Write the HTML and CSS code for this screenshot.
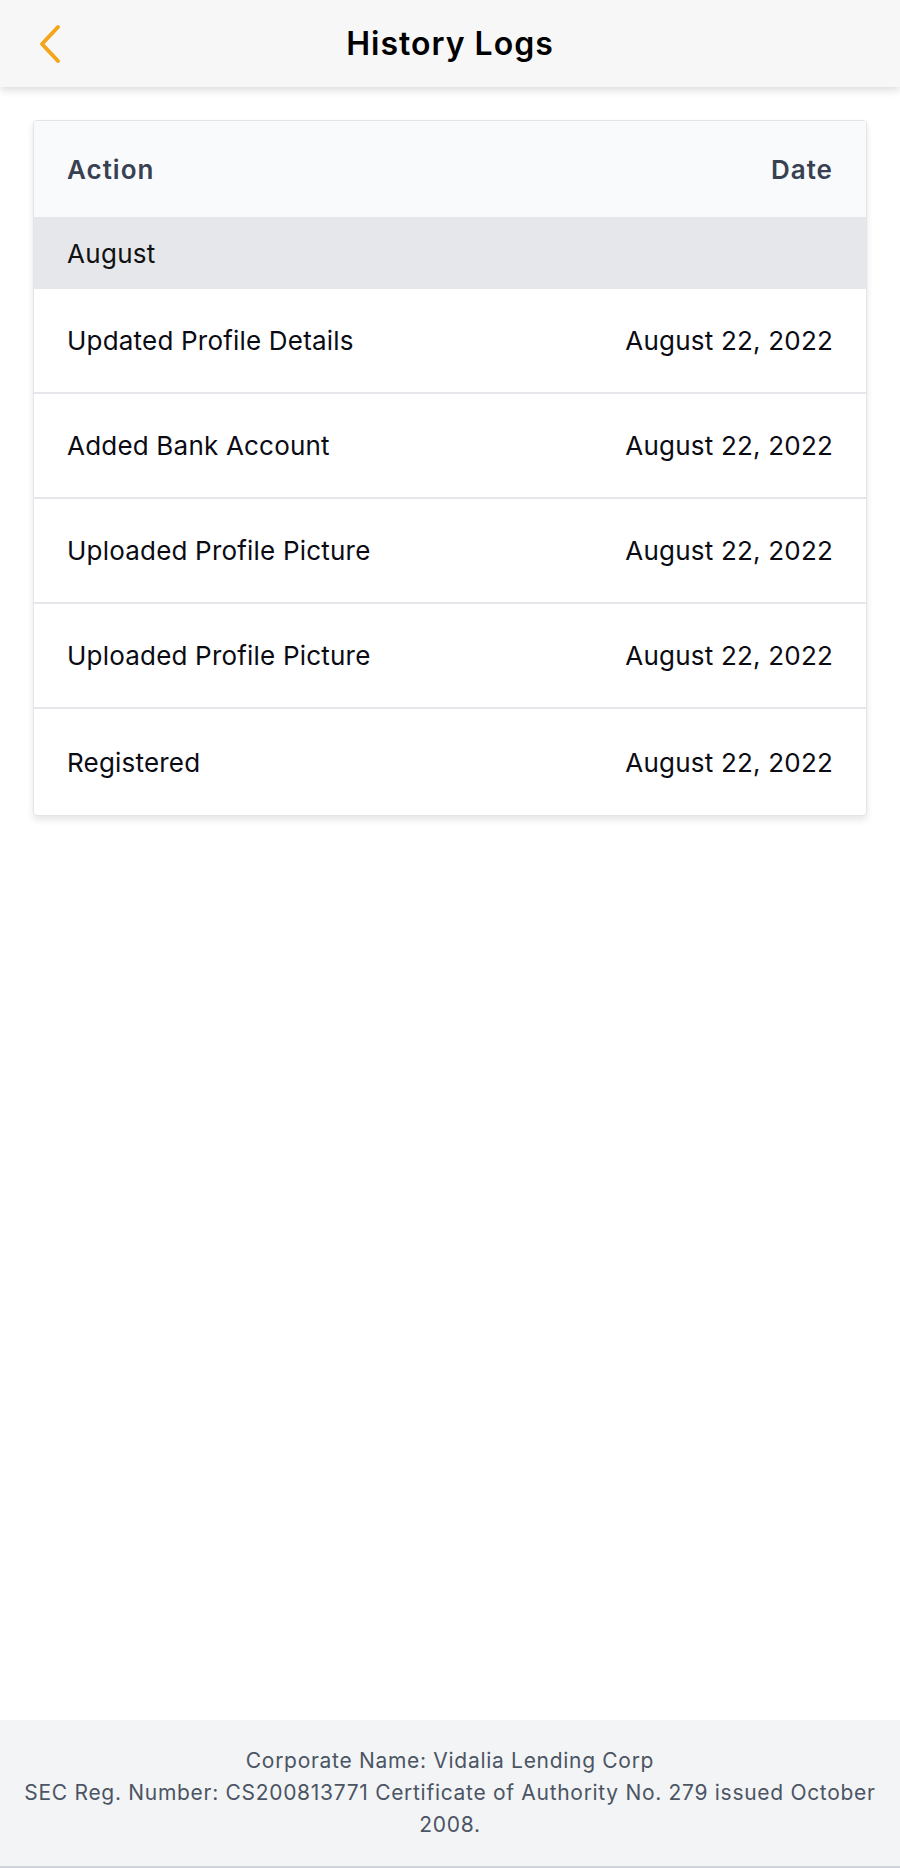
FILE: index.html
```html
<!DOCTYPE html>
<html lang="en">
<head>
<meta charset="utf-8">
<title>History Logs</title>
<link rel="stylesheet" href="styles.css">
</head>
<body>
<div class="page">
  <header class="topbar">
    <button class="back" aria-label="Back">
      <svg width="24" height="40" viewBox="0 0 24 40" fill="none">
        <path d="M20 3 L4 20 L20 37" stroke="#f5a51c" stroke-width="4" stroke-linecap="round" stroke-linejoin="round"/>
      </svg>
    </button>
    <h1 class="title">History Logs</h1>
  </header>

  <main class="content">
    <div class="card">
      <div class="row head">
        <span>Action</span>
        <span>Date</span>
      </div>
      <div class="row group">
        <span>August</span>
      </div>
      <div class="row item"><span>Updated Profile Details</span><span>August 22, 2022</span></div>
      <div class="row item"><span>Added Bank Account</span><span>August 22, 2022</span></div>
      <div class="row item"><span>Uploaded Profile Picture</span><span>August 22, 2022</span></div>
      <div class="row item"><span>Uploaded Profile Picture</span><span>August 22, 2022</span></div>
      <div class="row item last"><span>Registered</span><span>August 22, 2022</span></div>
    </div>
  </main>

  <footer class="footer">
    <p>Corporate Name: Vidalia Lending Corp</p>
    <p>SEC Reg. Number: CS200813771 Certificate of Authority No. 279 issued October 2008.</p>
  </footer>
</div>
</body>
</html>
```

FILE: styles.css
```css
* { box-sizing: border-box; }
html, body { margin: 0; padding: 0; background: #ffffff; }
body {
  font-family: "Inter", "Noto Sans", sans-serif;
  color: #111111;
}
.page {
  min-height: 1868px;
  display: flex;
  flex-direction: column;
}
.topbar {
  height: 87px;
  background: #f7f7f7;
  box-shadow: 0 3px 8px rgba(0, 0, 0, 0.14);
  display: flex;
  align-items: center;
  justify-content: center;
  position: relative;
  z-index: 2;
}
.back {
  position: absolute;
  left: 38px;
  top: 24px;
  padding: 0;
  border: 0;
  background: none;
  line-height: 0;
}
.title {
  margin: 0;
  font-size: 32px;
  font-weight: 600;
  color: #000000;
  letter-spacing: 1px;
}
.content {
  flex: 1;
  padding: 33px 33px 0;
}
.card {
  border: 1.5px solid #e3e4e8;
  border-radius: 4px;
  box-shadow: 0 4px 7px rgba(0, 0, 0, 0.10);
  overflow: hidden;
  background: #ffffff;
}
.row {
  display: flex;
  justify-content: space-between;
  align-items: center;
  padding: 0 33px;
}
.head {
  height: 96px;
  background: #f9fafb;
  color: #374151;
  font-weight: 600;
  font-size: 26px;
  letter-spacing: 1px;
}
.group {
  height: 72px;
  background: #e5e7eb;
  font-size: 26px;
  font-weight: 400;
  letter-spacing: 0.3px;
}
.item {
  height: 105px;
  border-bottom: 2px solid #e5e7eb;
  font-size: 26px;
  font-weight: 400;
  letter-spacing: 0.2px;
  color: #0b0b14;
}
.item.last { border-bottom: 0; height: 106px; }
.footer {
  background: #f3f4f6;
  border-bottom: 2px solid #d1d5db;
  padding: 25px 12px;
  text-align: center;
  color: #4b5563;
  font-size: 21px;
  letter-spacing: 0.7px;
  line-height: 32px;
}
.footer p { margin: 0; }
```
